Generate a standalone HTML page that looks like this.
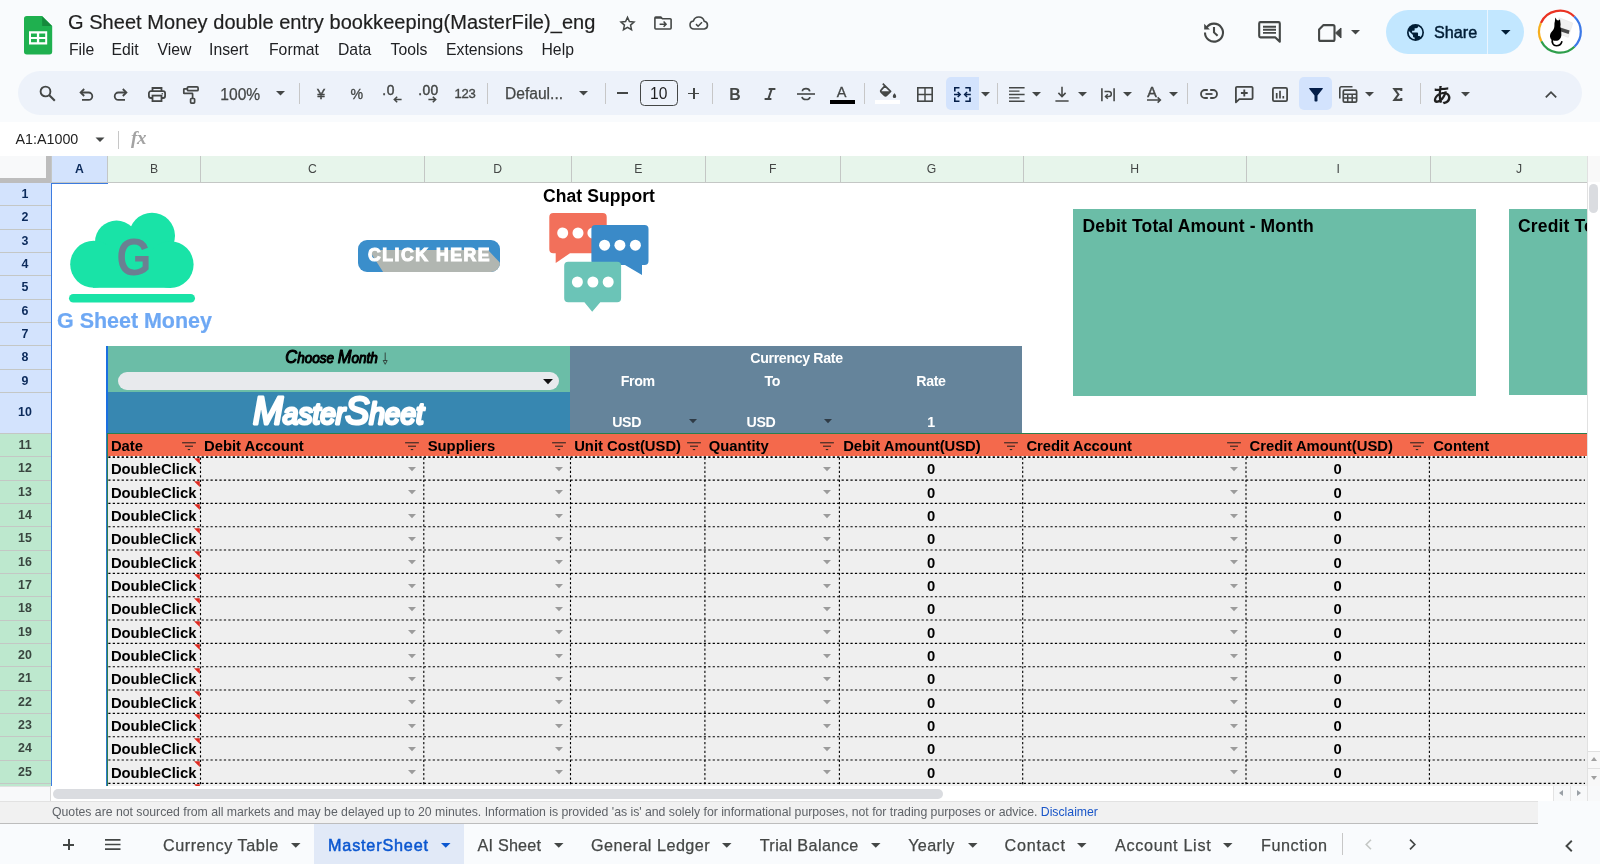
<!DOCTYPE html>
<html lang="en"><head><meta charset="utf-8"><title>G Sheet Money double entry bookkeeping(MasterFile)_eng - Google Sheets</title>
<style>
*{box-sizing:border-box;margin:0;padding:0}
html,body{width:1600px;height:864px;overflow:hidden;background:#f9fbfd;font-family:"Liberation Sans",sans-serif;color:#1f1f1f}
.abs{position:absolute}
#app{position:relative;width:1600px;height:864px;overflow:hidden;will-change:transform}
.t{position:absolute;white-space:nowrap;line-height:1}
svg{position:absolute;overflow:visible}
.menu span{position:absolute;top:41px;font-size:15.75px;color:#202124;line-height:18px;white-space:nowrap}
.ch{position:absolute;top:156px;height:26px;background:#e7f5eb;border-left:1px solid #c4c7c5;font-size:12.2px;color:#444746;text-align:center;line-height:26px}
.rh{position:absolute;left:0;width:51px;padding-right:1px;background:#d3e3fd;border-bottom:1px solid #c4c7c5;font-size:12.4px;font-weight:bold;color:#0b2a5b;text-align:center}
.rh.g{background:#bde8ce;color:#3a4640}
.cell{position:absolute;background:#efefef;border-right:1.6px dotted #000;border-bottom:1.6px dotted #000;font-size:14.67px;font-weight:bold;color:#000;line-height:24px;white-space:nowrap;overflow:visible}
.hd{position:absolute;top:434px;height:22.6px;font-size:14.8px;font-weight:bold;color:#000;line-height:24px;white-space:nowrap}
.tab{position:absolute;top:834px;font-size:16.2px;color:#444746;line-height:22px;white-space:nowrap;letter-spacing:.55px}
</style></head><body><div id="app">

<div class="t" style="left:68px;top:10px;font-size:20px;color:#1f1f1f;letter-spacing:.05px;line-height:24px;-webkit-text-stroke:.2px #1f1f1f">G Sheet Money double entry bookkeeping(MasterFile)_eng</div>
<div class="menu">
<span style="left:69px">File</span>
<span style="left:111.5px">Edit</span>
<span style="left:157.5px">View</span>
<span style="left:209px">Insert</span>
<span style="left:269px">Format</span>
<span style="left:338px">Data</span>
<span style="left:390.5px">Tools</span>
<span style="left:446px">Extensions</span>
<span style="left:541.5px">Help</span>
</div>
<svg style="left:23.800px;top:16.100px" width="28.200" height="38.500" viewBox="0 0 28.200 38.500">
<path d="M2.800 0H18.200L28.200 10V35.700a2.800 2.800 0 0 1-2.800 2.800H2.800A2.800 2.800 0 0 1 0 35.700V2.800A2.800 2.800 0 0 1 2.800 0z" fill="#1fb04f"/>
<path d="M18.200 .4V10h9.700z" fill="#16893c"/>
<path d="M5 15.200h18.200v13.400H5zM7 17.600v3.400h5.900v-3.400zm8.200 0v3.400h6v-3.400zM7 22.900v3.400h5.900v-3.400zm8.200 0v3.400h6v-3.400z" fill="#fff" fill-rule="evenodd"/>
</svg>
<svg style="left:619.30px;top:14.50px" width="17" height="17" viewBox="0 0 24 24" ><path d="M12 3.200l2.700 6 6.500.7-4.900 4.400 1.400 6.400L12 17.400l-5.700 3.300 1.400-6.400L2.800 9.900l6.500-.7z" fill="none" stroke="#444746" stroke-width="2.100" stroke-linejoin="miter"/></svg>
<svg style="left:654.20px;top:16.30px" width="18" height="14" viewBox="0 0 18 14" ><path d="M1.800 1h5l1.600 1.700h7.800a.9.900 0 0 1 .9.900v8.500a.9.900 0 0 1-.9.900H1.800a.9.900 0 0 1-.9-.9V1.900A.9.900 0 0 1 1.800 1z" fill="none" stroke="#444746" stroke-width="1.600"/><path d="M1 1h6l1.600 1.800H1z" fill="#444746"/><path d="M5.600 8.200h6.200M9.600 5.600l2.500 2.600-2.500 2.600" fill="none" stroke="#444746" stroke-width="1.500"/></svg>
<svg style="left:689.00px;top:16.30px" width="20" height="14" viewBox="0 0 20 14" ><path d="M5 13a4 4 0 0 1-.6-7.950A5.600 5.600 0 0 1 15.200 5.300 3.900 3.900 0 0 1 15.200 13z" fill="none" stroke="#444746" stroke-width="1.600" stroke-linejoin="round"/><path d="M7 8.100l2.100 2.100 3.900-4" fill="none" stroke="#444746" stroke-width="1.500"/></svg>
<svg style="left:1201.70px;top:20.00px" width="24" height="24" viewBox="0 0 24 24" ><path d="M4.600 7.500A9 9 0 1 1 3 12.500" fill="none" stroke="#444746" stroke-width="2.100"/><path d="M2.200 3.800v5.700h5.700z" fill="#444746"/><path d="M12 7v5.400l3.600 3.300" fill="none" stroke="#444746" stroke-width="2.100"/></svg>
<svg style="left:1257.70px;top:21.40px" width="23" height="22" viewBox="0 0 23 22" ><path d="M2.500 1.100h18a1.300 1.300 0 0 1 1.300 1.300V20.800l-4.400-4.400H2.500a1.300 1.300 0 0 1-1.300-1.300V2.400A1.300 1.300 0 0 1 2.500 1.100z" fill="none" stroke="#444746" stroke-width="2.100" stroke-linejoin="round"/><path d="M5 5.700h13M5 8.800h13M5 11.900h13" stroke="#444746" stroke-width="1.900"/></svg>
<svg style="left:1317.60px;top:23.80px" width="24" height="18" viewBox="0 0 24 18" ><path d="M5.500 1.100H15a1.500 1.500 0 0 1 1.500 1.500v12.800A1.500 1.500 0 0 1 15 16.900H2.600a1.500 1.500 0 0 1-1.500-1.500V5.500z" fill="none" stroke="#444746" stroke-width="2.100" stroke-linejoin="round"/><path d="M17.500 9L23 4v10z" fill="#444746" stroke="#444746" stroke-width="1" stroke-linejoin="round"/></svg>
<svg style="left:1351.40px;top:29.95px" width="9" height="4.5" viewBox="0 0 10 5"><path d="M0 0h10L5 5z" fill="#444746"/></svg>
<div class="abs" style="left:1386px;top:10px;width:138.400px;height:44px;border-radius:22px;background:#c2e7ff"></div>
<div class="abs" style="left:1487px;top:10px;width:1.300px;height:44px;background:#eaf5ff"></div>
<svg style="left:1406.90px;top:23.50px" width="17" height="17" viewBox="0 0 20 20" ><circle cx="10" cy="10" r="10" fill="#001d35"/><path d="M9 17.900A8 8 0 0 1 2 10c0-.6.100-1.200.2-1.800L7 13v1c0 1.100.9 2 2 2zm6.900-2.500c-.3-.8-1-1.400-1.900-1.400h-1v-3c0-.6-.4-1-1-1H6V8h2c.6 0 1-.4 1-1V5h2c1.100 0 2-.9 2-2v-.4A8 8 0 0 1 15.900 15.400z" fill="#c2e7ff"/></svg>
<div class="t" style="left:1434px;top:22px;font-size:16.200px;color:#001d35;line-height:20px;-webkit-text-stroke:.45px #001d35">Share</div>
<svg style="left:1500.75px;top:30.40px" width="9.5" height="4.8" viewBox="0 0 10 5"><path d="M0 0h10L5 5z" fill="#001d35"/></svg>
<svg style="left:1538px;top:10.300px" width="44" height="44" viewBox="0 0 44 44">
<circle cx="21.9" cy="21.7" r="21" fill="#fff"/>
<path d="M2.88 13.03A20.9 20.9 0 0 1 36.23 6.49" fill="none" stroke="#ea3323" stroke-width="2.250"/><path d="M36.23 6.49A20.9 20.9 0 0 1 36.42 36.73" fill="none" stroke="#3b78e7" stroke-width="2.250"/><path d="M36.42 36.73A20.9 20.9 0 0 1 3.28 31.19" fill="none" stroke="#2e9e4b" stroke-width="2.250"/><path d="M3.28 31.19A20.9 20.9 0 0 1 2.88 13.03" fill="none" stroke="#f6ae1e" stroke-width="2.250"/>
<path d="M20.800 7.600L34.800 13.100 30.200 27.400 19 23z" fill="#f0f0f0" stroke="#e2e2e2" stroke-width=".5"/>
<path d="M22.300 17.600l9.300 3-1 3.300-9.300-3z" fill="#484848"/>
<path d="M14.500 28.500c-1.200 4.800 1 7.300 3.700 7.300 2.900 0 5-1.500 5.600-4" fill="none" stroke="#000" stroke-width="1.600" stroke-linecap="round"/>
<path d="M17.300 7.600l1.700 2.700c.6-.1 1.200 0 1.700.2l1.300-1.300.5 4.200c.3 1.400-.2 2.400-.1 3.400.1 1.200.9 2 .7 3.400-.1 1 .4 2 .2 3.400.5 2.400-.7 5.700-2.800 6.700-2.300 1-6.300.6-7.800-1.600-1.500-2.300-.6-5.400 1.200-7.200 1.600-1.700 2.400-3.400 2.500-5.500.1-1.600-.1-2.600.4-4.200z" fill="#000"/>
</svg>
<div class="abs" style="left:18px;top:71px;width:1564px;height:44px;border-radius:22px;background:#edf2fa"></div>
<svg style="left:39.00px;top:85.10px" width="17" height="17" viewBox="0 0 17 17" ><circle cx="6.500" cy="6.500" r="4.900" fill="none" stroke="#444746" stroke-width="1.900"/><path d="M10.100 10.100L15.800 15.800" stroke="#444746" stroke-width="2.100"/></svg>
<svg style="left:78.60px;top:88.20px" width="14" height="13" viewBox="0 0 14 13" ><path d="M3 11.900h6.600a3.700 3.700 0 0 0 0-7.400H2" fill="none" stroke="#444746" stroke-width="1.800"/><path d="M5.200 1L1.600 4.500l3.600 3.500" fill="none" stroke="#444746" stroke-width="1.800"/></svg>
<svg style="left:113.50px;top:88.20px" width="14" height="13" viewBox="0 0 14 13" ><path d="M11 11.900H4.400a3.700 3.700 0 0 1 0-7.400H12" fill="none" stroke="#444746" stroke-width="1.800"/><path d="M8.800 1l3.600 3.500L8.800 8" fill="none" stroke="#444746" stroke-width="1.800"/></svg>
<svg style="left:147.70px;top:86.80px" width="18" height="15" viewBox="0 0 18 15" ><path d="M4.500 4.200V1h9v3.200" fill="none" stroke="#444746" stroke-width="1.800"/><rect x=".9" y="4.200" width="16.200" height="6.800" rx="2" fill="none" stroke="#444746" stroke-width="1.800"/><rect x="4.500" y="8.600" width="9" height="5.500" fill="#edf2fa" stroke="#444746" stroke-width="1.800"/><circle cx="14.300" cy="6.700" r=".8" fill="#444746"/></svg>
<svg style="left:183.20px;top:86.00px" width="16" height="18" viewBox="0 0 16 18" ><rect x="4.400" y=".9" width="10.700" height="3.800" rx="1" fill="none" stroke="#444746" stroke-width="1.700"/><path d="M4.400 2.800H1.300a.5.500 0 0 0-.5.500v3.600a.5.500 0 0 0 .5.500h7.800a.5.500 0 0 1 .5.500v4.400" fill="none" stroke="#444746" stroke-width="1.700"/><rect x="7.600" y="12.500" width="4" height="4.600" rx=".8" fill="none" stroke="#444746" stroke-width="1.700"/></svg>
<div class="t" style="left:220.3px;top:86.5px;font-size:15.6px;color:#444746;line-height:16px;-webkit-text-stroke:.25px #444746">100%</div>
<svg style="left:275.80px;top:91.15px" width="9" height="4.5" viewBox="0 0 10 5"><path d="M0 0h10L5 5z" fill="#444746"/></svg>
<div class="abs" style="left:298.9px;top:82.500px;width:1px;height:21px;background:#c7c7c7"></div>
<div class="t" style="left:317px;top:86px;font-size:14.5px;color:#444746;line-height:16px;-webkit-text-stroke:.4px #444746">¥</div>
<div class="t" style="left:350.6px;top:86px;font-size:14.2px;color:#444746;line-height:16px;-webkit-text-stroke:.3px #444746">%</div>
<div class="t" style="left:382.3px;top:84px;font-size:13.8px;color:#444746;line-height:14px;-webkit-text-stroke:.45px #444746;letter-spacing:.6px">.0</div>
<svg style="left:392.50px;top:96.10px" width="9" height="7" viewBox="0 0 9 7" ><path d="M8.600 3.500H1.500M4.200.7L1.300 3.500l2.900 2.800" fill="none" stroke="#444746" stroke-width="1.500"/></svg>
<div class="t" style="left:418.3px;top:84px;font-size:13.8px;color:#444746;line-height:14px;-webkit-text-stroke:.45px #444746;letter-spacing:.3px">.00</div>
<svg style="left:427.70px;top:96.10px" width="9" height="7" viewBox="0 0 9 7" ><path d="M.4 3.500h7.100M4.800.7l2.900 2.800-2.900 2.800" fill="none" stroke="#444746" stroke-width="1.500"/></svg>
<div class="t" style="left:454.5px;top:86.5px;font-size:13.1px;color:#444746;line-height:14px;-webkit-text-stroke:.35px #444746;letter-spacing:-.3px">123</div>
<div class="abs" style="left:486.6px;top:82.500px;width:1px;height:21px;background:#c7c7c7"></div>
<div class="t" style="left:505px;top:85.2px;font-size:15.6px;color:#444746;line-height:17px;-webkit-text-stroke:.25px #444746">Defaul...</div>
<svg style="left:578.60px;top:90.95px" width="9" height="4.5" viewBox="0 0 10 5"><path d="M0 0h10L5 5z" fill="#444746"/></svg>
<div class="abs" style="left:604.5px;top:82.500px;width:1px;height:21px;background:#c7c7c7"></div>
<div class="abs" style="left:617.200px;top:92.400px;width:11.200px;height:1.800px;background:#444746"></div>
<div class="abs" style="left:640px;top:80.300px;width:37.600px;height:25.800px;border:1.200px solid #444746;border-radius:4.500px"></div>
<div class="t" style="left:640px;top:86px;width:37.600px;text-align:center;font-size:15.600px;color:#1f1f1f;line-height:16px">10</div>
<div class="abs" style="left:688.300px;top:92.500px;width:11.200px;height:1.800px;background:#444746"></div>
<div class="abs" style="left:693px;top:87.800px;width:1.800px;height:11.200px;background:#444746"></div>
<div class="abs" style="left:712.1px;top:82.500px;width:1px;height:21px;background:#c7c7c7"></div>
<div class="t" style="left:729.3px;top:85.6px;font-size:15.8px;color:#444746;line-height:17px;font-weight:bold">B</div>
<svg style="left:764.00px;top:88.00px" width="12" height="12" viewBox="0 0 12 12" ><path d="M4.600 1h6.800M.6 11h6.800M7.700 1L4.300 11" fill="none" stroke="#444746" stroke-width="2"/></svg>
<svg style="left:796.60px;top:87.00px" width="18" height="14" viewBox="0 0 18 14" ><path d="M0 7h18" stroke="#444746" stroke-width="1.600"/><path d="M12.800 4.300C12.500 2.600 11 1.600 9 1.600c-2.100 0-3.600 1-3.600 2.600" fill="none" stroke="#444746" stroke-width="1.700"/><path d="M5 9.800c.3 1.700 1.800 2.700 4 2.700s3.800-1 3.800-2.600" fill="none" stroke="#444746" stroke-width="1.700"/></svg>
<div class="t" style="left:836.8px;top:84.7px;font-size:14.5px;color:#444746;line-height:15px;-webkit-text-stroke:.3px #444746">A</div>
<div class="abs" style="left:829.600px;top:100px;width:25.400px;height:4.100px;background:#000"></div>
<div class="abs" style="left:864.2px;top:82.500px;width:1px;height:21px;background:#c7c7c7"></div>
<svg style="left:879.60px;top:82.55px" width="17" height="15.5" viewBox="0 0 17 15.500" ><path d="M2.800 .6l2.200 2.200M5 2.800l5.600 5.600-4.100 4.100a1.400 1.400 0 0 1-2 0L1.100 9.100a1.400 1.400 0 0 1 0-2z" fill="none" stroke="#444746" stroke-width="1.700" stroke-linejoin="round"/><path d="M.8 8.300h9.700l-5 5z" fill="#444746"/><path d="M14.500 10.300s1.700 1.900 1.700 3.100a1.700 1.700 0 0 1-3.400 0c0-1.200 1.700-3.100 1.700-3.100z" fill="#444746"/></svg>
<div class="abs" style="left:875px;top:100px;width:25.400px;height:4.100px;background:#fff"></div>
<svg style="left:917.10px;top:86.90px" width="16" height="15" viewBox="0 0 16 15" ><rect x=".8" y=".8" width="14.400" height="13.400" fill="none" stroke="#444746" stroke-width="1.600"/><path d="M8 1v13M1 7.500h14" stroke="#444746" stroke-width="1.450"/></svg>
<div class="abs" style="left:945.700px;top:77px;width:33.300px;height:32.800px;border-radius:5px 0 0 5px;background:#d3e3fd"></div>
<svg style="left:953.70px;top:86.70px" width="16.8" height="15" viewBox="0 0 16.800 15" ><path d="M.8 4.400V.8h4.700M16 4.400V.8h-4.700M.8 10.600v3.600h4.700M16 10.600v3.600h-4.700" fill="none" stroke="#041e49" stroke-width="1.600"/><path d="M0 7.500h5.600M11.200 7.500h5.600" stroke="#041e49" stroke-width="1.500"/><path d="M3.700 5L6.200 7.500 3.700 10M13.100 5l-2.500 2.500 2.500 2.500" fill="none" stroke="#041e49" stroke-width="1.500"/></svg>
<svg style="left:980.80px;top:91.75px" width="9" height="4.5" viewBox="0 0 10 5"><path d="M0 0h10L5 5z" fill="#444746"/></svg>
<div class="abs" style="left:996.9px;top:82.500px;width:1px;height:21px;background:#c7c7c7"></div>
<svg style="left:1008.80px;top:87.00px" width="16" height="15" viewBox="0 0 16 15" ><path d="M0 .8h15.600M0 4.150h10.500M0 7.500h15.600M0 10.850h10.500M0 14.200h15.600" stroke="#444746" stroke-width="1.400"/></svg>
<svg style="left:1031.80px;top:91.75px" width="9" height="4.5" viewBox="0 0 10 5"><path d="M0 0h10L5 5z" fill="#444746"/></svg>
<svg style="left:1055.10px;top:86.20px" width="14" height="16" viewBox="0 0 14 16" ><path d="M7 .8v9.500M3.400 6.900L7 10.600l3.600-3.700" fill="none" stroke="#444746" stroke-width="1.550"/><path d="M.4 15h13.200" stroke="#444746" stroke-width="1.500"/></svg>
<svg style="left:1077.70px;top:91.75px" width="9" height="4.5" viewBox="0 0 10 5"><path d="M0 0h10L5 5z" fill="#444746"/></svg>
<svg style="left:1100.70px;top:86.70px" width="14" height="15" viewBox="0 0 14 15" ><path d="M.9 1.200v13M13.100 1.200v13" stroke="#444746" stroke-width="1.600"/><path d="M3.500 4.500h4.300a2.500 2.500 0 0 1 0 5H5" fill="none" stroke="#444746" stroke-width="1.500"/><path d="M6.800 7.300L4.500 9.500l2.300 2.200" fill="none" stroke="#444746" stroke-width="1.500"/></svg>
<svg style="left:1123.30px;top:91.75px" width="9" height="4.5" viewBox="0 0 10 5"><path d="M0 0h10L5 5z" fill="#444746"/></svg>
<div class="t" style="left:1147.3px;top:84.8px;font-size:14.3px;color:#444746;line-height:15px;-webkit-text-stroke:.45px #444746">A</div>
<svg style="left:1146.55px;top:96.50px" width="14.5" height="6" viewBox="0 0 14.500 6" ><path d="M0 3h13M10.600 .4L13.400 3 10.600 5.600" fill="none" stroke="#444746" stroke-width="1.500"/></svg>
<svg style="left:1169.00px;top:91.75px" width="9" height="4.5" viewBox="0 0 10 5"><path d="M0 0h10L5 5z" fill="#444746"/></svg>
<div class="abs" style="left:1186.7px;top:82.500px;width:1px;height:21px;background:#c7c7c7"></div>
<svg style="left:1199.80px;top:89.40px" width="18" height="10" viewBox="0 0 18 10" ><path d="M7.800 1H5a4 4 0 0 0 0 8h2.800M10.200 1H13a4 4 0 0 1 0 8h-2.800" fill="none" stroke="#444746" stroke-width="1.800"/><path d="M5.500 5h7" stroke="#444746" stroke-width="1.800"/></svg>
<svg style="left:1234.95px;top:85.70px" width="18.5" height="17" viewBox="0 0 18.500 17" ><path d="M2 .9h14.500a1.100 1.100 0 0 1 1.100 1.100v10a1.100 1.100 0 0 1-1.100 1.100H4.300L.9 16.300V2A1.100 1.100 0 0 1 2 .9z" fill="none" stroke="#444746" stroke-width="1.800" stroke-linejoin="round"/><path d="M9.300 3.600v6.800M5.900 7h6.800" stroke="#444746" stroke-width="1.850"/></svg>
<svg style="left:1272.00px;top:86.50px" width="16" height="15" viewBox="0 0 16 15" ><rect x=".9" y=".9" width="14.200" height="13.200" rx="1.300" fill="none" stroke="#444746" stroke-width="1.800"/><path d="M4.700 6v5.500M8 3.700v7.800M11.300 9v2.500" stroke="#444746" stroke-width="1.700"/></svg>
<div class="abs" style="left:1299px;top:77px;width:33px;height:32.800px;border-radius:5px;background:#d3e3fd"></div>
<svg style="left:1308.80px;top:87.65px" width="14" height="13.5" viewBox="0 0 14 13.500" ><path d="M.6 0h12.800a.5.500 0 0 1 .4.800L8.500 7.400v5.300a.8.800 0 0 1-.8.800H6.300a.8.800 0 0 1-.8-.8V7.400L.2.800A.5.500 0 0 1 .6 0z" fill="#041e49"/></svg>
<svg style="left:1338.95px;top:85.90px" width="18.5" height="17" viewBox="0 0 18.500 17" ><path d="M.8 12.500V2.300A1.500 1.500 0 0 1 2.300.8h11.200" fill="none" stroke="#444746" stroke-width="1.600"/><rect x="4.300" y="4.200" width="13.300" height="12" rx="1.200" fill="none" stroke="#444746" stroke-width="1.700"/><path d="M4.300 8.200h13.300M4.300 12.100h13.300M8.700 8.200v8M13.200 8.200v8" stroke="#444746" stroke-width="1.500"/></svg>
<svg style="left:1364.50px;top:91.75px" width="9" height="4.5" viewBox="0 0 10 5"><path d="M0 0h10L5 5z" fill="#444746"/></svg>
<svg style="left:1392.70px;top:87.70px" width="9" height="13" viewBox="0 0 9 13" ><path d="M8.300 3V1.100H1.400L5.400 6.500 1.400 11.900h6.900V10" fill="none" stroke="#444746" stroke-width="2.100" stroke-linejoin="miter"/></svg>
<div class="abs" style="left:1420.1px;top:82.500px;width:1px;height:21px;background:#c7c7c7"></div>
<div class="t" style="left:1432px;top:85.300px;font-size:20px;font-weight:bold;color:#1f1f1f;line-height:22px;font-family:'Liberation Sans','Noto Sans CJK JP',sans-serif">あ</div>
<svg style="left:1460.90px;top:91.75px" width="9" height="4.5" viewBox="0 0 10 5"><path d="M0 0h10L5 5z" fill="#444746"/></svg>
<svg style="left:1545.00px;top:91.10px" width="12" height="7" viewBox="0 0 12 7" ><path d="M.8 6.300L6 1.200l5.200 5.100" fill="none" stroke="#444746" stroke-width="1.800"/></svg>
<div class="abs" style="left:0;top:122px;width:1600px;height:34px;background:#fff"></div>
<div class="t" style="left:15.5px;top:131px;font-size:14.3px;color:#1f1f1f;line-height:17px">A1:A1000</div>
<svg style="left:94px;top:136px" width="12" height="8" viewBox="0 0 12 8"><path d="M1.5 1.5h9L6 6z" fill="#444746"/></svg>
<div class="abs" style="left:118px;top:131px;width:1px;height:18px;background:#c7c7c7"></div>
<div class="t" style="left:131px;top:128px;font-family:'Liberation Serif',serif;font-style:italic;font-weight:bold;font-size:19px;color:#a3a3a3;line-height:20px;letter-spacing:-.3px">fx</div>
<div class="abs" style="left:0;top:155.5px;width:1600px;height:631px;background:#fff"></div>
<div class="abs" style="left:0;top:155.5px;width:1600px;height:1px;background:#c4c7c5"></div>
<div class="abs" style="left:0;top:156px;width:51px;height:26.5px;background:#f8f9fa"></div>
<div class="abs" style="left:46px;top:156px;width:5px;height:26.5px;background:#bdbdbd"></div>
<div class="abs" style="left:0;top:178px;width:51px;height:4.5px;background:#bdbdbd"></div>
<div class="abs" style="left:0;top:0;width:1586.700px;height:200px;overflow:hidden">
<div class="ch" style="left:51px;width:56px;background:#d3e3fd;color:#0b2a5b;font-weight:bold;">A</div>
<div class="ch" style="left:107px;width:93px;">B</div>
<div class="ch" style="left:200px;width:224px;">C</div>
<div class="ch" style="left:424px;width:146.5px;">D</div>
<div class="ch" style="left:570.5px;width:134.5px;">E</div>
<div class="ch" style="left:705px;width:134.5px;">F</div>
<div class="ch" style="left:839.5px;width:183.0px;">G</div>
<div class="ch" style="left:1022.5px;width:223.5px;">H</div>
<div class="ch" style="left:1246px;width:183.5px;">I</div>
<div class="ch" style="left:1429.5px;width:178.0px;">J</div>
</div>
<div class="abs" style="left:51px;top:181.800px;width:1549px;height:1px;background:#c4c7c5"></div>
<div class="abs" style="left:1586.700px;top:156px;width:13.300px;height:630px;background:#fff;border-left:1px solid #e1e1e1"></div>
<div class="abs" style="left:1587.700px;top:156px;width:12.300px;height:26px;background:#f9f9f9"></div>
<div class="rh" style="top:183.00px;height:23.33px;line-height:22.13px">1</div>
<div class="rh" style="top:206.33px;height:23.33px;line-height:22.13px">2</div>
<div class="rh" style="top:229.67px;height:23.33px;line-height:22.13px">3</div>
<div class="rh" style="top:253.00px;height:23.33px;line-height:22.13px">4</div>
<div class="rh" style="top:276.33px;height:23.33px;line-height:22.13px">5</div>
<div class="rh" style="top:299.66px;height:23.33px;line-height:22.13px">6</div>
<div class="rh" style="top:323.00px;height:23.33px;line-height:22.13px">7</div>
<div class="rh" style="top:346.33px;height:23.33px;line-height:22.13px">8</div>
<div class="rh" style="top:369.66px;height:23.33px;line-height:22.13px">9</div>
<div class="rh" style="top:393.00px;height:41.00px;line-height:39.80px">10</div>
<div class="rh g" style="top:434.00px;height:23.33px;line-height:22.13px">11</div>
<div class="rh g" style="top:457.33px;height:23.33px;line-height:22.13px">12</div>
<div class="rh g" style="top:480.66px;height:23.33px;line-height:22.13px">13</div>
<div class="rh g" style="top:504.00px;height:23.33px;line-height:22.13px">14</div>
<div class="rh g" style="top:527.33px;height:23.33px;line-height:22.13px">15</div>
<div class="rh g" style="top:550.66px;height:23.33px;line-height:22.13px">16</div>
<div class="rh g" style="top:573.99px;height:23.33px;line-height:22.13px">17</div>
<div class="rh g" style="top:597.33px;height:23.33px;line-height:22.13px">18</div>
<div class="rh g" style="top:620.66px;height:23.33px;line-height:22.13px">19</div>
<div class="rh g" style="top:643.99px;height:23.33px;line-height:22.13px">20</div>
<div class="rh g" style="top:667.33px;height:23.33px;line-height:22.13px">21</div>
<div class="rh g" style="top:690.66px;height:23.33px;line-height:22.13px">22</div>
<div class="rh g" style="top:713.99px;height:23.33px;line-height:22.13px">23</div>
<div class="rh g" style="top:737.33px;height:23.33px;line-height:22.13px">24</div>
<div class="rh g" style="top:760.66px;height:23.33px;line-height:22.13px">25</div>
<div class="rh g" style="top:783.99px;height:23.33px;line-height:22.13px">26</div>
<div class="abs" style="left:50.5px;top:182px;width:1px;height:604px;background:#c4c7c5"></div>
<div class="abs" style="left:51px;top:182.500px;width:1535.700px;height:603.500px;overflow:hidden">
<div class="abs" style="left:-51px;top:-182.500px;width:1600px;height:864px">
<svg style="left:66px;top:210px" width="132" height="94" viewBox="66 210 132 94">
<g fill="#19e3a7">
<circle cx="152" cy="235.800" r="23"/>
<circle cx="116.500" cy="242" r="21.500"/>
<circle cx="93.700" cy="264.300" r="23.500"/>
<circle cx="170.300" cy="264.600" r="23.300"/>
<rect x="93" y="250" width="78" height="37.800"/>
<rect x="69" y="294" width="126" height="8.600" rx="4.300"/>
</g></svg>
<div class="t" style="left:114px;top:231px;width:40px;text-align:center;font-size:51.500px;font-weight:bold;color:#6b7f92;line-height:52px;transform:scaleX(.87)">G</div>
<div class="t" style="left:57px;top:309.400px;font-size:21.500px;font-weight:bold;color:#6ea8f4;line-height:24px;letter-spacing:-.03px;-webkit-text-stroke:.2px #6ea8f4">G Sheet Money</div>
<svg style="left:358px;top:239.500px" width="142" height="32" viewBox="0 0 142 32">
<defs><clipPath id="cb"><rect width="142" height="32" rx="9"/></clipPath></defs>
<rect width="142" height="32" rx="9" fill="#3a8ecb"/>
<path d="M11 10h119l14 15v10H27z" fill="#b1b6b1" clip-path="url(#cb)"/>
<text x="71.500" y="21.300" text-anchor="middle" font-family="Liberation Sans, sans-serif" font-weight="bold" font-size="17.600" fill="#fff" stroke="#fff" stroke-width="1.100" letter-spacing="1.550">CLICK HERE</text>
</svg>
<div class="t" style="left:543px;top:186px;font-size:17.500px;font-weight:bold;color:#000;line-height:20px;letter-spacing:.1px">Chat Support</div>
<svg style="left:545px;top:210px" width="110" height="105" viewBox="545 210 110 105">
<path d="M553.300 213h49.400a4 4 0 0 1 4 4v32.300a4 4 0 0 1-4 4H570l-14.300 9.700v-9.700h-2.400a4 4 0 0 1-4-4V217a4 4 0 0 1 4-4z" fill="#f2705b"/>
<g fill="#fff"><circle cx="562.700" cy="233" r="5.500"/><circle cx="578" cy="233" r="5.500"/><circle cx="592.900" cy="233" r="5.500"/></g>
<path d="M595.400 225h49.100a4 4 0 0 1 4 4v32a4 4 0 0 1-4 4h-2.500v10L625 265h-29.600a4 4 0 0 1-4-4v-32a4 4 0 0 1 4-4z" fill="#3a8ac8"/>
<g fill="#fff"><circle cx="604.600" cy="245.200" r="5.500"/><circle cx="619.900" cy="245.200" r="5.500"/><circle cx="635.400" cy="245.200" r="5.500"/></g>
<path d="M568.200 261.800h48.900a4 4 0 0 1 4 4v32.400a4 4 0 0 1-4 4h-16.800l-8.100 9.600-7.800-9.600h-16.200a4 4 0 0 1-4-4v-32.400a4 4 0 0 1 4-4z" fill="#6bc4b7"/>
<g fill="#fff"><circle cx="577.400" cy="282" r="5.500"/><circle cx="592.900" cy="282" r="5.500"/><circle cx="608.200" cy="282" r="5.500"/></g>
</svg>
<div class="abs" style="left:1073px;top:209px;width:402.500px;height:187px;background:#6bbda7"></div>
<div class="abs" style="left:1509px;top:209px;width:100px;height:186px;background:#6bbda7"></div>
<div class="t" style="left:1082.500px;top:216px;font-size:17.500px;font-weight:bold;color:#000;line-height:21px;letter-spacing:.15px">Debit Total Amount - Month</div>
<div class="t" style="left:1518px;top:215.500px;font-size:17.500px;font-weight:bold;color:#000;line-height:21px;letter-spacing:.15px">Credit Total Amount - Month</div>
<div class="abs" style="left:107px;top:345.500px;width:463px;height:47px;background:#6bbda7"></div>
<div class="abs" style="left:107px;top:392.300px;width:463px;height:41.300px;background:#3787b1"></div>
<div class="abs" style="left:570px;top:345.500px;width:452.200px;height:88.100px;background:#65849b"></div>
<svg style="left:107px;top:345.500px" width="463" height="88" viewBox="0 0 463 88"><g font-family="Liberation Sans, sans-serif" font-style="italic" stroke-linejoin="round" stroke-linecap="round"><text transform="translate(178.300 17.100) scale(.915 1)" font-size="14.800" fill="#000" stroke="#000" stroke-width="1.100"><tspan font-size="18">C</tspan>hoose <tspan font-size="18">M</tspan>onth</text><text transform="translate(145.900 77.800) scale(.935 1)" font-size="30" fill="#fff" stroke="#fff" stroke-width="2.900"><tspan font-size="38.500">M</tspan>aster<tspan font-size="38.500">S</tspan>heet</text></g><path d="M278.200 6.500v8.500M276.200 14.500h4l-2 3.800z" fill="none" stroke="#2e3b36" stroke-width=".9"/></svg>
<div class="abs" style="left:117.800px;top:372px;width:441.700px;height:17.700px;border-radius:9px;background:#e8eaed"></div>
<svg style="left:543.00px;top:378.50px" width="10" height="5.200" viewBox="0 0 8 4.200"><path d="M0 0h8L4 4.200z" fill="#111"/></svg>
<div class="t" style="left:570.500px;top:349.500px;width:452px;color:#fff;font-weight:bold;font-size:14.200px;line-height:17px;text-align:center;letter-spacing:-.35px">Currency Rate</div>
<div class="t" style="left:570.500px;top:373px;width:134.500px;color:#fff;font-weight:bold;font-size:14.200px;line-height:17px;text-align:center;letter-spacing:-.35px">From</div>
<div class="t" style="left:705px;top:373px;width:134.500px;color:#fff;font-weight:bold;font-size:14.200px;line-height:17px;text-align:center;letter-spacing:-.35px">To</div>
<div class="t" style="left:839.500px;top:373px;width:183px;color:#fff;font-weight:bold;font-size:14.200px;line-height:17px;text-align:center;letter-spacing:-.35px">Rate</div>
<div class="t" style="left:576.600px;top:414px;width:100px;color:#fff;font-weight:bold;font-size:14.200px;line-height:17px;text-align:center;letter-spacing:-.35px">USD</div>
<div class="t" style="left:711px;top:414px;width:100px;color:#fff;font-weight:bold;font-size:14.200px;line-height:17px;text-align:center;letter-spacing:-.35px">USD</div>
<div class="t" style="left:839.500px;top:414px;width:183px;color:#fff;font-weight:bold;font-size:14.200px;line-height:17px;text-align:center;letter-spacing:-.35px">1</div>
<svg style="left:689.00px;top:419.20px" width="8" height="4.200" viewBox="0 0 8 4.200"><path d="M0 0h8L4 4.200z" fill="#2f3b46"/></svg>
<svg style="left:823.50px;top:419.20px" width="8" height="4.200" viewBox="0 0 8 4.200"><path d="M0 0h8L4 4.200z" fill="#2f3b46"/></svg>
<div class="abs" style="left:107px;top:434px;width:1480.500px;height:22.300px;background:#f4694c"></div>
<div class="abs" style="left:106.900px;top:433px;width:1480.500px;height:1.100px;background:#2a7f4f"></div>
<div class="hd" style="left:110.9px">Date</div>
<svg style="left:181.50px;top:441.70px" width="14" height="9" viewBox="0 0 14 9"><path d="M.1 .8h13.800M3 4.200h8M5.800 7.600h2.400" stroke="#1c1f1d" stroke-width="1"/></svg>
<div class="hd" style="left:204px">Debit Account</div>
<svg style="left:405.20px;top:441.70px" width="14" height="9" viewBox="0 0 14 9"><path d="M.1 .8h13.800M3 4.200h8M5.800 7.600h2.400" stroke="#1c1f1d" stroke-width="1"/></svg>
<div class="hd" style="left:427.7px">Suppliers</div>
<svg style="left:551.70px;top:441.70px" width="14" height="9" viewBox="0 0 14 9"><path d="M.1 .8h13.800M3 4.200h8M5.800 7.600h2.400" stroke="#1c1f1d" stroke-width="1"/></svg>
<div class="hd" style="left:574.2px">Unit Cost(USD)</div>
<svg style="left:686.50px;top:441.70px" width="14" height="9" viewBox="0 0 14 9"><path d="M.1 .8h13.800M3 4.200h8M5.800 7.600h2.400" stroke="#1c1f1d" stroke-width="1"/></svg>
<div class="hd" style="left:708.7px">Quantity</div>
<svg style="left:820.30px;top:441.70px" width="14" height="9" viewBox="0 0 14 9"><path d="M.1 .8h13.800M3 4.200h8M5.800 7.600h2.400" stroke="#1c1f1d" stroke-width="1"/></svg>
<div class="hd" style="left:843.2px">Debit Amount(USD)</div>
<svg style="left:1004.00px;top:441.70px" width="14" height="9" viewBox="0 0 14 9"><path d="M.1 .8h13.800M3 4.200h8M5.800 7.600h2.400" stroke="#1c1f1d" stroke-width="1"/></svg>
<div class="hd" style="left:1026.4px">Credit Account</div>
<svg style="left:1227.30px;top:441.70px" width="14" height="9" viewBox="0 0 14 9"><path d="M.1 .8h13.800M3 4.200h8M5.800 7.600h2.400" stroke="#1c1f1d" stroke-width="1"/></svg>
<div class="hd" style="left:1249.6px">Credit Amount(USD)</div>
<svg style="left:1410.30px;top:441.70px" width="14" height="9" viewBox="0 0 14 9"><path d="M.1 .8h13.800M3 4.200h8M5.800 7.600h2.400" stroke="#1c1f1d" stroke-width="1"/></svg>
<div class="hd" style="left:1433.2px">Content</div>
<div class="abs" style="left:107px;top:456.933px;width:1480.500px;height:340px;background:#efefef"></div>
<div class="t" style="left:110.900px;top:461.23px;font-size:14.800px;font-weight:bold;color:#000;line-height:17px">DoubleClick</div>
<svg style="left:194.200px;top:457.73px" width="5.800" height="6.200" viewBox="0 0 7 7"><path d="M0 0h7v7z" fill="#e0291f"/></svg>
<svg style="left:408.20px;top:467.00px" width="8" height="4.200" viewBox="0 0 8 4.200"><path d="M0 0h8L4 4.200z" fill="#9b9b9b"/></svg>
<svg style="left:554.70px;top:467.00px" width="8" height="4.200" viewBox="0 0 8 4.200"><path d="M0 0h8L4 4.200z" fill="#9b9b9b"/></svg>
<svg style="left:823.30px;top:467.00px" width="8" height="4.200" viewBox="0 0 8 4.200"><path d="M0 0h8L4 4.200z" fill="#9b9b9b"/></svg>
<svg style="left:1230.30px;top:467.00px" width="8" height="4.200" viewBox="0 0 8 4.200"><path d="M0 0h8L4 4.200z" fill="#9b9b9b"/></svg>
<div class="t" style="left:911px;top:461.23px;width:40px;text-align:center;font-size:14.800px;font-weight:bold;color:#000;line-height:17px">0</div>
<div class="t" style="left:1317.7px;top:461.23px;width:40px;text-align:center;font-size:14.800px;font-weight:bold;color:#000;line-height:17px">0</div>
<div class="t" style="left:110.900px;top:484.57px;font-size:14.800px;font-weight:bold;color:#000;line-height:17px">DoubleClick</div>
<svg style="left:194.200px;top:481.07px" width="5.800" height="6.200" viewBox="0 0 7 7"><path d="M0 0h7v7z" fill="#e0291f"/></svg>
<svg style="left:408.20px;top:490.33px" width="8" height="4.200" viewBox="0 0 8 4.200"><path d="M0 0h8L4 4.200z" fill="#9b9b9b"/></svg>
<svg style="left:554.70px;top:490.33px" width="8" height="4.200" viewBox="0 0 8 4.200"><path d="M0 0h8L4 4.200z" fill="#9b9b9b"/></svg>
<svg style="left:823.30px;top:490.33px" width="8" height="4.200" viewBox="0 0 8 4.200"><path d="M0 0h8L4 4.200z" fill="#9b9b9b"/></svg>
<svg style="left:1230.30px;top:490.33px" width="8" height="4.200" viewBox="0 0 8 4.200"><path d="M0 0h8L4 4.200z" fill="#9b9b9b"/></svg>
<div class="t" style="left:911px;top:484.57px;width:40px;text-align:center;font-size:14.800px;font-weight:bold;color:#000;line-height:17px">0</div>
<div class="t" style="left:1317.7px;top:484.57px;width:40px;text-align:center;font-size:14.800px;font-weight:bold;color:#000;line-height:17px">0</div>
<div class="t" style="left:110.900px;top:507.90px;font-size:14.800px;font-weight:bold;color:#000;line-height:17px">DoubleClick</div>
<svg style="left:194.200px;top:504.40px" width="5.800" height="6.200" viewBox="0 0 7 7"><path d="M0 0h7v7z" fill="#e0291f"/></svg>
<svg style="left:408.20px;top:513.67px" width="8" height="4.200" viewBox="0 0 8 4.200"><path d="M0 0h8L4 4.200z" fill="#9b9b9b"/></svg>
<svg style="left:554.70px;top:513.67px" width="8" height="4.200" viewBox="0 0 8 4.200"><path d="M0 0h8L4 4.200z" fill="#9b9b9b"/></svg>
<svg style="left:823.30px;top:513.67px" width="8" height="4.200" viewBox="0 0 8 4.200"><path d="M0 0h8L4 4.200z" fill="#9b9b9b"/></svg>
<svg style="left:1230.30px;top:513.67px" width="8" height="4.200" viewBox="0 0 8 4.200"><path d="M0 0h8L4 4.200z" fill="#9b9b9b"/></svg>
<div class="t" style="left:911px;top:507.90px;width:40px;text-align:center;font-size:14.800px;font-weight:bold;color:#000;line-height:17px">0</div>
<div class="t" style="left:1317.7px;top:507.90px;width:40px;text-align:center;font-size:14.800px;font-weight:bold;color:#000;line-height:17px">0</div>
<div class="t" style="left:110.900px;top:531.23px;font-size:14.800px;font-weight:bold;color:#000;line-height:17px">DoubleClick</div>
<svg style="left:194.200px;top:527.73px" width="5.800" height="6.200" viewBox="0 0 7 7"><path d="M0 0h7v7z" fill="#e0291f"/></svg>
<svg style="left:408.20px;top:537.00px" width="8" height="4.200" viewBox="0 0 8 4.200"><path d="M0 0h8L4 4.200z" fill="#9b9b9b"/></svg>
<svg style="left:554.70px;top:537.00px" width="8" height="4.200" viewBox="0 0 8 4.200"><path d="M0 0h8L4 4.200z" fill="#9b9b9b"/></svg>
<svg style="left:823.30px;top:537.00px" width="8" height="4.200" viewBox="0 0 8 4.200"><path d="M0 0h8L4 4.200z" fill="#9b9b9b"/></svg>
<svg style="left:1230.30px;top:537.00px" width="8" height="4.200" viewBox="0 0 8 4.200"><path d="M0 0h8L4 4.200z" fill="#9b9b9b"/></svg>
<div class="t" style="left:911px;top:531.23px;width:40px;text-align:center;font-size:14.800px;font-weight:bold;color:#000;line-height:17px">0</div>
<div class="t" style="left:1317.7px;top:531.23px;width:40px;text-align:center;font-size:14.800px;font-weight:bold;color:#000;line-height:17px">0</div>
<div class="t" style="left:110.900px;top:554.56px;font-size:14.800px;font-weight:bold;color:#000;line-height:17px">DoubleClick</div>
<svg style="left:194.200px;top:551.06px" width="5.800" height="6.200" viewBox="0 0 7 7"><path d="M0 0h7v7z" fill="#e0291f"/></svg>
<svg style="left:408.20px;top:560.33px" width="8" height="4.200" viewBox="0 0 8 4.200"><path d="M0 0h8L4 4.200z" fill="#9b9b9b"/></svg>
<svg style="left:554.70px;top:560.33px" width="8" height="4.200" viewBox="0 0 8 4.200"><path d="M0 0h8L4 4.200z" fill="#9b9b9b"/></svg>
<svg style="left:823.30px;top:560.33px" width="8" height="4.200" viewBox="0 0 8 4.200"><path d="M0 0h8L4 4.200z" fill="#9b9b9b"/></svg>
<svg style="left:1230.30px;top:560.33px" width="8" height="4.200" viewBox="0 0 8 4.200"><path d="M0 0h8L4 4.200z" fill="#9b9b9b"/></svg>
<div class="t" style="left:911px;top:554.56px;width:40px;text-align:center;font-size:14.800px;font-weight:bold;color:#000;line-height:17px">0</div>
<div class="t" style="left:1317.7px;top:554.56px;width:40px;text-align:center;font-size:14.800px;font-weight:bold;color:#000;line-height:17px">0</div>
<div class="t" style="left:110.900px;top:577.90px;font-size:14.800px;font-weight:bold;color:#000;line-height:17px">DoubleClick</div>
<svg style="left:194.200px;top:574.40px" width="5.800" height="6.200" viewBox="0 0 7 7"><path d="M0 0h7v7z" fill="#e0291f"/></svg>
<svg style="left:408.20px;top:583.66px" width="8" height="4.200" viewBox="0 0 8 4.200"><path d="M0 0h8L4 4.200z" fill="#9b9b9b"/></svg>
<svg style="left:554.70px;top:583.66px" width="8" height="4.200" viewBox="0 0 8 4.200"><path d="M0 0h8L4 4.200z" fill="#9b9b9b"/></svg>
<svg style="left:823.30px;top:583.66px" width="8" height="4.200" viewBox="0 0 8 4.200"><path d="M0 0h8L4 4.200z" fill="#9b9b9b"/></svg>
<svg style="left:1230.30px;top:583.66px" width="8" height="4.200" viewBox="0 0 8 4.200"><path d="M0 0h8L4 4.200z" fill="#9b9b9b"/></svg>
<div class="t" style="left:911px;top:577.90px;width:40px;text-align:center;font-size:14.800px;font-weight:bold;color:#000;line-height:17px">0</div>
<div class="t" style="left:1317.7px;top:577.90px;width:40px;text-align:center;font-size:14.800px;font-weight:bold;color:#000;line-height:17px">0</div>
<div class="t" style="left:110.900px;top:601.23px;font-size:14.800px;font-weight:bold;color:#000;line-height:17px">DoubleClick</div>
<svg style="left:194.200px;top:597.73px" width="5.800" height="6.200" viewBox="0 0 7 7"><path d="M0 0h7v7z" fill="#e0291f"/></svg>
<svg style="left:408.20px;top:607.00px" width="8" height="4.200" viewBox="0 0 8 4.200"><path d="M0 0h8L4 4.200z" fill="#9b9b9b"/></svg>
<svg style="left:554.70px;top:607.00px" width="8" height="4.200" viewBox="0 0 8 4.200"><path d="M0 0h8L4 4.200z" fill="#9b9b9b"/></svg>
<svg style="left:823.30px;top:607.00px" width="8" height="4.200" viewBox="0 0 8 4.200"><path d="M0 0h8L4 4.200z" fill="#9b9b9b"/></svg>
<svg style="left:1230.30px;top:607.00px" width="8" height="4.200" viewBox="0 0 8 4.200"><path d="M0 0h8L4 4.200z" fill="#9b9b9b"/></svg>
<div class="t" style="left:911px;top:601.23px;width:40px;text-align:center;font-size:14.800px;font-weight:bold;color:#000;line-height:17px">0</div>
<div class="t" style="left:1317.7px;top:601.23px;width:40px;text-align:center;font-size:14.800px;font-weight:bold;color:#000;line-height:17px">0</div>
<div class="t" style="left:110.900px;top:624.56px;font-size:14.800px;font-weight:bold;color:#000;line-height:17px">DoubleClick</div>
<svg style="left:194.200px;top:621.06px" width="5.800" height="6.200" viewBox="0 0 7 7"><path d="M0 0h7v7z" fill="#e0291f"/></svg>
<svg style="left:408.20px;top:630.33px" width="8" height="4.200" viewBox="0 0 8 4.200"><path d="M0 0h8L4 4.200z" fill="#9b9b9b"/></svg>
<svg style="left:554.70px;top:630.33px" width="8" height="4.200" viewBox="0 0 8 4.200"><path d="M0 0h8L4 4.200z" fill="#9b9b9b"/></svg>
<svg style="left:823.30px;top:630.33px" width="8" height="4.200" viewBox="0 0 8 4.200"><path d="M0 0h8L4 4.200z" fill="#9b9b9b"/></svg>
<svg style="left:1230.30px;top:630.33px" width="8" height="4.200" viewBox="0 0 8 4.200"><path d="M0 0h8L4 4.200z" fill="#9b9b9b"/></svg>
<div class="t" style="left:911px;top:624.56px;width:40px;text-align:center;font-size:14.800px;font-weight:bold;color:#000;line-height:17px">0</div>
<div class="t" style="left:1317.7px;top:624.56px;width:40px;text-align:center;font-size:14.800px;font-weight:bold;color:#000;line-height:17px">0</div>
<div class="t" style="left:110.900px;top:647.90px;font-size:14.800px;font-weight:bold;color:#000;line-height:17px">DoubleClick</div>
<svg style="left:194.200px;top:644.40px" width="5.800" height="6.200" viewBox="0 0 7 7"><path d="M0 0h7v7z" fill="#e0291f"/></svg>
<svg style="left:408.20px;top:653.66px" width="8" height="4.200" viewBox="0 0 8 4.200"><path d="M0 0h8L4 4.200z" fill="#9b9b9b"/></svg>
<svg style="left:554.70px;top:653.66px" width="8" height="4.200" viewBox="0 0 8 4.200"><path d="M0 0h8L4 4.200z" fill="#9b9b9b"/></svg>
<svg style="left:823.30px;top:653.66px" width="8" height="4.200" viewBox="0 0 8 4.200"><path d="M0 0h8L4 4.200z" fill="#9b9b9b"/></svg>
<svg style="left:1230.30px;top:653.66px" width="8" height="4.200" viewBox="0 0 8 4.200"><path d="M0 0h8L4 4.200z" fill="#9b9b9b"/></svg>
<div class="t" style="left:911px;top:647.90px;width:40px;text-align:center;font-size:14.800px;font-weight:bold;color:#000;line-height:17px">0</div>
<div class="t" style="left:1317.7px;top:647.90px;width:40px;text-align:center;font-size:14.800px;font-weight:bold;color:#000;line-height:17px">0</div>
<div class="t" style="left:110.900px;top:671.23px;font-size:14.800px;font-weight:bold;color:#000;line-height:17px">DoubleClick</div>
<svg style="left:194.200px;top:667.73px" width="5.800" height="6.200" viewBox="0 0 7 7"><path d="M0 0h7v7z" fill="#e0291f"/></svg>
<svg style="left:408.20px;top:677.00px" width="8" height="4.200" viewBox="0 0 8 4.200"><path d="M0 0h8L4 4.200z" fill="#9b9b9b"/></svg>
<svg style="left:554.70px;top:677.00px" width="8" height="4.200" viewBox="0 0 8 4.200"><path d="M0 0h8L4 4.200z" fill="#9b9b9b"/></svg>
<svg style="left:823.30px;top:677.00px" width="8" height="4.200" viewBox="0 0 8 4.200"><path d="M0 0h8L4 4.200z" fill="#9b9b9b"/></svg>
<svg style="left:1230.30px;top:677.00px" width="8" height="4.200" viewBox="0 0 8 4.200"><path d="M0 0h8L4 4.200z" fill="#9b9b9b"/></svg>
<div class="t" style="left:911px;top:671.23px;width:40px;text-align:center;font-size:14.800px;font-weight:bold;color:#000;line-height:17px">0</div>
<div class="t" style="left:1317.7px;top:671.23px;width:40px;text-align:center;font-size:14.800px;font-weight:bold;color:#000;line-height:17px">0</div>
<div class="t" style="left:110.900px;top:694.56px;font-size:14.800px;font-weight:bold;color:#000;line-height:17px">DoubleClick</div>
<svg style="left:194.200px;top:691.06px" width="5.800" height="6.200" viewBox="0 0 7 7"><path d="M0 0h7v7z" fill="#e0291f"/></svg>
<svg style="left:408.20px;top:700.33px" width="8" height="4.200" viewBox="0 0 8 4.200"><path d="M0 0h8L4 4.200z" fill="#9b9b9b"/></svg>
<svg style="left:554.70px;top:700.33px" width="8" height="4.200" viewBox="0 0 8 4.200"><path d="M0 0h8L4 4.200z" fill="#9b9b9b"/></svg>
<svg style="left:823.30px;top:700.33px" width="8" height="4.200" viewBox="0 0 8 4.200"><path d="M0 0h8L4 4.200z" fill="#9b9b9b"/></svg>
<svg style="left:1230.30px;top:700.33px" width="8" height="4.200" viewBox="0 0 8 4.200"><path d="M0 0h8L4 4.200z" fill="#9b9b9b"/></svg>
<div class="t" style="left:911px;top:694.56px;width:40px;text-align:center;font-size:14.800px;font-weight:bold;color:#000;line-height:17px">0</div>
<div class="t" style="left:1317.7px;top:694.56px;width:40px;text-align:center;font-size:14.800px;font-weight:bold;color:#000;line-height:17px">0</div>
<div class="t" style="left:110.900px;top:717.90px;font-size:14.800px;font-weight:bold;color:#000;line-height:17px">DoubleClick</div>
<svg style="left:194.200px;top:714.40px" width="5.800" height="6.200" viewBox="0 0 7 7"><path d="M0 0h7v7z" fill="#e0291f"/></svg>
<svg style="left:408.20px;top:723.66px" width="8" height="4.200" viewBox="0 0 8 4.200"><path d="M0 0h8L4 4.200z" fill="#9b9b9b"/></svg>
<svg style="left:554.70px;top:723.66px" width="8" height="4.200" viewBox="0 0 8 4.200"><path d="M0 0h8L4 4.200z" fill="#9b9b9b"/></svg>
<svg style="left:823.30px;top:723.66px" width="8" height="4.200" viewBox="0 0 8 4.200"><path d="M0 0h8L4 4.200z" fill="#9b9b9b"/></svg>
<svg style="left:1230.30px;top:723.66px" width="8" height="4.200" viewBox="0 0 8 4.200"><path d="M0 0h8L4 4.200z" fill="#9b9b9b"/></svg>
<div class="t" style="left:911px;top:717.90px;width:40px;text-align:center;font-size:14.800px;font-weight:bold;color:#000;line-height:17px">0</div>
<div class="t" style="left:1317.7px;top:717.90px;width:40px;text-align:center;font-size:14.800px;font-weight:bold;color:#000;line-height:17px">0</div>
<div class="t" style="left:110.900px;top:741.23px;font-size:14.800px;font-weight:bold;color:#000;line-height:17px">DoubleClick</div>
<svg style="left:194.200px;top:737.73px" width="5.800" height="6.200" viewBox="0 0 7 7"><path d="M0 0h7v7z" fill="#e0291f"/></svg>
<svg style="left:408.20px;top:747.00px" width="8" height="4.200" viewBox="0 0 8 4.200"><path d="M0 0h8L4 4.200z" fill="#9b9b9b"/></svg>
<svg style="left:554.70px;top:747.00px" width="8" height="4.200" viewBox="0 0 8 4.200"><path d="M0 0h8L4 4.200z" fill="#9b9b9b"/></svg>
<svg style="left:823.30px;top:747.00px" width="8" height="4.200" viewBox="0 0 8 4.200"><path d="M0 0h8L4 4.200z" fill="#9b9b9b"/></svg>
<svg style="left:1230.30px;top:747.00px" width="8" height="4.200" viewBox="0 0 8 4.200"><path d="M0 0h8L4 4.200z" fill="#9b9b9b"/></svg>
<div class="t" style="left:911px;top:741.23px;width:40px;text-align:center;font-size:14.800px;font-weight:bold;color:#000;line-height:17px">0</div>
<div class="t" style="left:1317.7px;top:741.23px;width:40px;text-align:center;font-size:14.800px;font-weight:bold;color:#000;line-height:17px">0</div>
<div class="t" style="left:110.900px;top:764.56px;font-size:14.800px;font-weight:bold;color:#000;line-height:17px">DoubleClick</div>
<svg style="left:194.200px;top:761.06px" width="5.800" height="6.200" viewBox="0 0 7 7"><path d="M0 0h7v7z" fill="#e0291f"/></svg>
<svg style="left:408.20px;top:770.33px" width="8" height="4.200" viewBox="0 0 8 4.200"><path d="M0 0h8L4 4.200z" fill="#9b9b9b"/></svg>
<svg style="left:554.70px;top:770.33px" width="8" height="4.200" viewBox="0 0 8 4.200"><path d="M0 0h8L4 4.200z" fill="#9b9b9b"/></svg>
<svg style="left:823.30px;top:770.33px" width="8" height="4.200" viewBox="0 0 8 4.200"><path d="M0 0h8L4 4.200z" fill="#9b9b9b"/></svg>
<svg style="left:1230.30px;top:770.33px" width="8" height="4.200" viewBox="0 0 8 4.200"><path d="M0 0h8L4 4.200z" fill="#9b9b9b"/></svg>
<div class="t" style="left:911px;top:764.56px;width:40px;text-align:center;font-size:14.800px;font-weight:bold;color:#000;line-height:17px">0</div>
<div class="t" style="left:1317.7px;top:764.56px;width:40px;text-align:center;font-size:14.800px;font-weight:bold;color:#000;line-height:17px">0</div>
<div class="t" style="left:110.900px;top:787.89px;font-size:14.800px;font-weight:bold;color:#000;line-height:17px">DoubleClick</div>
<svg style="left:194.200px;top:784.39px" width="5.800" height="6.200" viewBox="0 0 7 7"><path d="M0 0h7v7z" fill="#e0291f"/></svg>
<svg style="left:408.20px;top:793.66px" width="8" height="4.200" viewBox="0 0 8 4.200"><path d="M0 0h8L4 4.200z" fill="#9b9b9b"/></svg>
<svg style="left:554.70px;top:793.66px" width="8" height="4.200" viewBox="0 0 8 4.200"><path d="M0 0h8L4 4.200z" fill="#9b9b9b"/></svg>
<svg style="left:823.30px;top:793.66px" width="8" height="4.200" viewBox="0 0 8 4.200"><path d="M0 0h8L4 4.200z" fill="#9b9b9b"/></svg>
<svg style="left:1230.30px;top:793.66px" width="8" height="4.200" viewBox="0 0 8 4.200"><path d="M0 0h8L4 4.200z" fill="#9b9b9b"/></svg>
<div class="t" style="left:911px;top:787.89px;width:40px;text-align:center;font-size:14.800px;font-weight:bold;color:#000;line-height:17px">0</div>
<div class="t" style="left:1317.7px;top:787.89px;width:40px;text-align:center;font-size:14.800px;font-weight:bold;color:#000;line-height:17px">0</div>
<svg style="left:0;top:0" width="1600" height="864" viewBox="0 0 1600 864"><g stroke="#000" stroke-width="1.110" stroke-dasharray="2.222 2.222" fill="none"><path d="M108.300 457.150H1585" stroke-width="1.900"/><path d="M108.300 480.07H1585"/><path d="M108.300 503.40H1585"/><path d="M108.300 526.73H1585"/><path d="M108.300 550.06H1585"/><path d="M108.300 573.40H1585"/><path d="M108.300 596.73H1585"/><path d="M108.300 620.06H1585"/><path d="M108.300 643.40H1585"/><path d="M108.300 666.73H1585"/><path d="M108.300 690.06H1585"/><path d="M108.300 713.40H1585"/><path d="M108.300 736.73H1585"/><path d="M108.300 760.06H1585"/><path d="M108.300 783.39H1585"/><path d="M108.300 806.73H1585"/><path d="M200.50 457.53V800"/><path d="M423.80 457.53V800"/><path d="M570.50 457.53V800"/><path d="M704.90 457.53V800"/><path d="M839.40 457.53V800"/><path d="M1022.70 457.53V800"/><path d="M1246.00 457.53V800"/><path d="M1429.40 457.53V800"/></g></svg>
</div></div>
<div class="abs" style="left:51px;top:182.600px;width:56.800px;height:1.400px;background:#3c7be0"></div>
<div class="abs" style="left:50.900px;top:182.600px;width:1.300px;height:603.400px;background:#3c7be0"></div>
<div class="abs" style="left:105.700px;top:345.500px;width:2.300px;height:88px;background:#1a6fe0"></div>
<div class="abs" style="left:105.700px;top:433px;width:1.200px;height:353px;background:#2b78c8"></div>
<div class="abs" style="left:106.900px;top:433px;width:1.100px;height:353px;background:#2e7d4f"></div>
<div class="abs" style="left:0;top:786px;width:1600px;height:15px;background:#fff"></div>
<div class="abs" style="left:0;top:786px;width:51px;height:15px;background:#f8f9fa;border-right:1px solid #d9d9d9;border-top:1px solid #e1e1e1"></div>
<div class="abs" style="left:53px;top:789px;width:890px;height:9.500px;border-radius:5px;background:#dadce0"></div>
<div class="abs" style="left:1553px;top:786px;width:47px;height:15px;background:#f8f9fa;border-left:1px solid #e3e3e3"></div>
<div class="abs" style="left:1569.800px;top:786px;width:1px;height:15px;background:#e3e3e3"></div>
<div class="abs" style="left:1587px;top:786px;width:1px;height:15px;background:#e3e3e3"></div>
<svg style="left:1558.600px;top:790.300px" width="4" height="6" viewBox="0 0 4 6"><path d="M4 0v6L0 3z" fill="#9aa0a6"/></svg>
<svg style="left:1577.200px;top:790.300px" width="4" height="6" viewBox="0 0 4 6"><path d="M0 0v6l4-3z" fill="#9aa0a6"/></svg>
<div class="abs" style="left:1589.300px;top:184.300px;width:9px;height:28.500px;border-radius:4.500px;background:#dadce0"></div>
<div class="abs" style="left:1587.700px;top:751px;width:12.300px;height:35px;background:#f8f8f8"></div>
<div class="abs" style="left:1587.700px;top:751px;width:12.300px;height:1px;background:#e0e0e0"></div>
<div class="abs" style="left:1587.700px;top:767.800px;width:12.300px;height:1px;background:#e0e0e0"></div>
<svg style="left:1590.900px;top:757.400px" width="6" height="4" viewBox="0 0 6 4"><path d="M0 4h6L3 0z" fill="#a0a0a0"/></svg>
<svg style="left:1590.900px;top:775.600px" width="6" height="4" viewBox="0 0 6 4"><path d="M0 0h6L3 4z" fill="#a0a0a0"/></svg>
<div class="abs" style="left:0;top:801px;width:1538px;height:22.700px;background:#f1f1f1;border-top:1px solid #e2e2e2;border-bottom:1.200px solid #bdbdbd"></div>
<div class="t" style="left:52px;top:805px;font-size:12.290px;color:#5f6368;line-height:15px;letter-spacing:-.02px">Quotes are not sourced from all markets and may be delayed up to 20 minutes. Information is provided 'as is' and solely for informational purposes, not for trading purposes or advice. <span style="color:#1a56c8">Disclaimer</span></div>
<div class="abs" style="left:314px;top:824px;width:149.500px;height:40px;background:#e1e9f7"></div>
<div class="abs" style="left:62.700px;top:843.500px;width:11.800px;height:2px;background:#444746"></div>
<div class="abs" style="left:67.600px;top:838.600px;width:2px;height:11.800px;background:#444746"></div>
<svg style="left:105px;top:839px" width="15.500" height="11" viewBox="0 0 15.500 11"><path d="M0 .9h15.500M0 5.500h15.500M0 10.100h15.500" stroke="#444746" stroke-width="1.700"/></svg>
<div class="tab" id="tab0" style="left:163px;letter-spacing:0.52px;-webkit-text-stroke:.25px #444746;">Currency Table</div>
<svg style="left:291.25px;top:842.90px" width="9.5" height="4.8" viewBox="0 0 10 5"><path d="M0 0h10L5 5z" fill="#444746"/></svg>
<div class="tab" id="tab1" style="left:328px;letter-spacing:0.82px;color:#0b57d0;-webkit-text-stroke:.5px #0b57d0;">MasterSheet</div>
<svg style="left:441.45px;top:842.90px" width="9.5" height="4.8" viewBox="0 0 10 5"><path d="M0 0h10L5 5z" fill="#0b57d0"/></svg>
<div class="tab" id="tab2" style="left:477.5px;letter-spacing:0.2px;-webkit-text-stroke:.25px #444746;">AI Sheet</div>
<svg style="left:553.75px;top:842.90px" width="9.5" height="4.8" viewBox="0 0 10 5"><path d="M0 0h10L5 5z" fill="#444746"/></svg>
<div class="tab" id="tab3" style="left:591px;letter-spacing:0.48px;-webkit-text-stroke:.25px #444746;">General Ledger</div>
<svg style="left:721.85px;top:842.90px" width="9.5" height="4.8" viewBox="0 0 10 5"><path d="M0 0h10L5 5z" fill="#444746"/></svg>
<div class="tab" id="tab4" style="left:759.7px;letter-spacing:0.385px;-webkit-text-stroke:.25px #444746;">Trial Balance</div>
<svg style="left:871.05px;top:842.90px" width="9.5" height="4.8" viewBox="0 0 10 5"><path d="M0 0h10L5 5z" fill="#444746"/></svg>
<div class="tab" id="tab5" style="left:908.2px;letter-spacing:0.36px;-webkit-text-stroke:.25px #444746;">Yearly</div>
<svg style="left:967.55px;top:842.90px" width="9.5" height="4.8" viewBox="0 0 10 5"><path d="M0 0h10L5 5z" fill="#444746"/></svg>
<div class="tab" id="tab6" style="left:1004.5px;letter-spacing:0.77px;-webkit-text-stroke:.25px #444746;">Contact</div>
<svg style="left:1076.95px;top:842.90px" width="9.5" height="4.8" viewBox="0 0 10 5"><path d="M0 0h10L5 5z" fill="#444746"/></svg>
<div class="tab" id="tab7" style="left:1115.1px;letter-spacing:0.67px;-webkit-text-stroke:.25px #444746;">Account List</div>
<svg style="left:1223.25px;top:842.90px" width="9.5" height="4.8" viewBox="0 0 10 5"><path d="M0 0h10L5 5z" fill="#444746"/></svg>
<div class="tab" id="tab8" style="left:1261px;letter-spacing:0.56px;-webkit-text-stroke:.25px #444746;">Function</div>
<div class="abs" style="left:1342px;top:833px;width:1px;height:22px;background:#c7c7c7"></div>
<svg style="left:1364.500px;top:839.400px" width="7" height="11" viewBox="0 0 7 11"><path d="M6 .7L1.200 5.500 6 10.300" fill="none" stroke="#c4c7c5" stroke-width="1.600"/></svg>
<svg style="left:1408.500px;top:839.400px" width="7" height="11" viewBox="0 0 7 11"><path d="M1 .7l4.800 4.800L1 10.300" fill="none" stroke="#444746" stroke-width="1.700"/></svg>
<svg style="left:1565px;top:840.400px" width="8" height="12" viewBox="0 0 8 12"><path d="M6.800 .8L1.500 6l5.300 5.200" fill="none" stroke="#444746" stroke-width="1.900"/></svg>
</div></body></html>
